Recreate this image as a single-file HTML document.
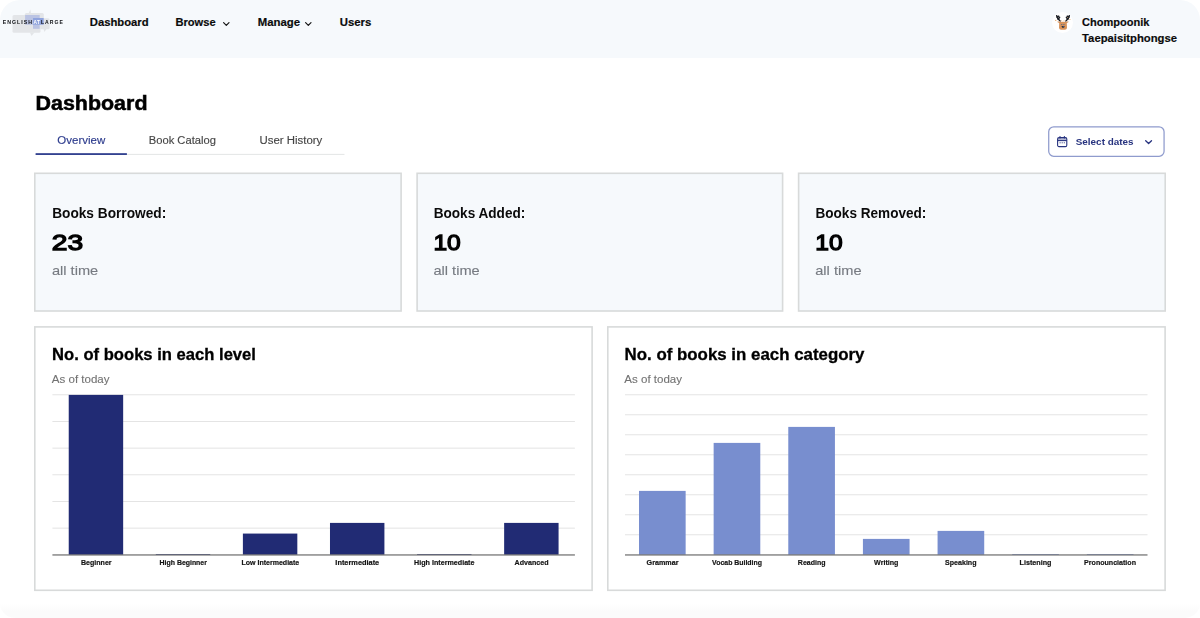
<!DOCTYPE html>
<html lang="en">
<head>
<meta charset="utf-8">
<title>Dashboard</title>
<style>
*{box-sizing:border-box;margin:0;padding:0}
html,body{width:1200px;height:618px;overflow:hidden;background:#fff}
body{font-family:"Liberation Sans",sans-serif;position:relative}
.t{position:absolute;white-space:nowrap;text-decoration:none;font-style:normal;display:block;transform-origin:0 0}
header{position:absolute;left:0;top:0;width:1200px;height:57.5px;background:#f6f9fc;border-radius:20px 20px 0 0}
svg{position:absolute;overflow:visible}
.bg{left:0;top:0}
.tabs-line{position:absolute;left:35.6px;top:154px;width:308.8px;height:1px;background:#e2e5e5}
.tabs-active{position:absolute;left:35.6px;top:153px;width:91.3px;height:2px;background:#2b3a8c}
.select{position:absolute;left:1048px;top:126.3px;width:116.6px;height:30.5px;border:0;background:transparent}
.avatar{position:absolute;left:1051.9px;top:11.5px;width:21.5px;height:21.5px;border-radius:50%;background:#fff}
footer{position:absolute;left:0;top:603px;width:1200px;height:15px;background:linear-gradient(#fff,#fbfbfb 60%);border-radius:0 0 20px 20px}
#n1{left:89px;top:14px;font-size:11.1px;line-height:14px;font-weight:700;color:#0b0b0b;transform:translate(0.77px,0.80px) scaleX(1.0154);-webkit-text-stroke:0.18px #0b0b0b}
#n2{left:175px;top:14px;font-size:11.1px;line-height:14px;font-weight:700;color:#0b0b0b;transform:translate(0.38px,0.80px) scaleX(1.0041);-webkit-text-stroke:0.18px #0b0b0b}
#n3{left:257px;top:14px;font-size:11.1px;line-height:14px;font-weight:700;color:#0b0b0b;transform:translate(0.66px,0.80px) scaleX(1.0249);-webkit-text-stroke:0.18px #0b0b0b}
#n4{left:339px;top:14px;font-size:11.1px;line-height:14px;font-weight:700;color:#0b0b0b;transform:translate(0.76px,0.80px) scaleX(1.0227);-webkit-text-stroke:0.18px #0b0b0b}
#u1{left:1082px;top:14px;font-size:11.1px;line-height:14px;font-weight:700;color:#0b0b0b;transform:translate(0.08px,0.90px) scaleX(0.9933);-webkit-text-stroke:0.18px #0b0b0b}
#u2{left:1082px;top:31px;font-size:11.1px;line-height:14px;font-weight:700;color:#0b0b0b;transform:translate(0.07px,0.40px) scaleX(1.0154);-webkit-text-stroke:0.18px #0b0b0b}
#h1{left:35px;top:91px;font-size:20.3px;line-height:25px;font-weight:700;color:#000;transform:translate(0.50px,0.00px) scaleX(1.0570);-webkit-text-stroke:0.5px #000}
#tab1{left:57px;top:132px;font-size:11.7px;line-height:15px;font-weight:400;color:#2b3a8c;transform:translate(0.36px,0.10px) scaleX(0.9814);-webkit-text-stroke:0.15px #2b3a8c}
#tab2{left:148px;top:132px;font-size:11.7px;line-height:15px;font-weight:400;color:#454545;transform:translate(0.77px,0.10px) scaleX(0.9564);-webkit-text-stroke:0.15px #454545}
#tab3{left:259px;top:132px;font-size:11.7px;line-height:15px;font-weight:400;color:#454545;transform:translate(0.56px,0.10px) scaleX(0.9753);-webkit-text-stroke:0.15px #454545}
#sel{left:1075px;top:135px;font-size:9.8px;line-height:12px;font-weight:700;color:#27337f;transform:translate(0.75px,0.70px) scaleX(1.0107)}
#cl0{left:52px;top:204px;font-size:14.2px;line-height:18px;font-weight:700;color:#0b0b0b;transform:translate(0.13px,0.00px) scaleX(0.9648)}
#cn0{left:51px;top:228px;font-size:22.9px;line-height:28px;font-weight:400;color:#000;transform:translate(0.72px,0.20px) scaleX(1.2315);-webkit-text-stroke:1.3px #000}
#ct0{left:51px;top:263px;font-size:13.0px;line-height:16px;font-weight:400;color:#777b82;transform:translate(0.88px,0.00px) scaleX(1.1255);-webkit-text-stroke:0.12px #777b82}
#cl1{left:433px;top:204px;font-size:14.2px;line-height:18px;font-weight:700;color:#0b0b0b;transform:translate(0.64px,0.00px) scaleX(0.9587)}
#cn1{left:433px;top:228px;font-size:22.9px;line-height:28px;font-weight:400;color:#000;transform:translate(0.42px,0.20px) scaleX(1.0744);-webkit-text-stroke:1.3px #000}
#ct1{left:433px;top:263px;font-size:13.0px;line-height:16px;font-weight:400;color:#777b82;transform:translate(0.38px,0.00px) scaleX(1.1255);-webkit-text-stroke:0.12px #777b82}
#cl2{left:815px;top:204px;font-size:14.2px;line-height:18px;font-weight:700;color:#0b0b0b;transform:translate(0.44px,0.00px) scaleX(0.9569)}
#cn2{left:815px;top:228px;font-size:22.9px;line-height:28px;font-weight:400;color:#000;transform:translate(0.22px,0.20px) scaleX(1.0744);-webkit-text-stroke:1.3px #000}
#ct2{left:815px;top:263px;font-size:13.0px;line-height:16px;font-weight:400;color:#777b82;transform:translate(0.18px,0.00px) scaleX(1.1255);-webkit-text-stroke:0.12px #777b82}
#g1t{left:52px;top:343px;font-size:16.9px;line-height:21px;font-weight:700;color:#000;transform:translate(0.07px,0.70px) scaleX(0.9829);-webkit-text-stroke:0.3px #000}
#g1s{left:51px;top:373px;font-size:10.8px;line-height:13px;font-weight:400;color:#727272;transform:translate(0.85px,0.00px) scaleX(1.0681);-webkit-text-stroke:0.1px #727272}
#g2t{left:624px;top:343px;font-size:16.9px;line-height:21px;font-weight:700;color:#000;transform:translate(0.56px,0.70px) scaleX(0.9984);-webkit-text-stroke:0.3px #000}
#g2s{left:624px;top:373px;font-size:10.8px;line-height:13px;font-weight:400;color:#727272;transform:translate(0.35px,0.00px) scaleX(1.0681);-webkit-text-stroke:0.1px #727272}
#l1_0{left:81px;top:558px;font-size:7.8px;line-height:10px;font-weight:700;color:#141414;transform:translate(0.00px,0.40px) scaleX(0.9046);-webkit-text-stroke:0.2px #141414}
#l1_1{left:159px;top:558px;font-size:7.8px;line-height:10px;font-weight:700;color:#141414;transform:translate(0.61px,0.40px) scaleX(0.8872);-webkit-text-stroke:0.2px #141414}
#l1_2{left:241px;top:558px;font-size:7.8px;line-height:10px;font-weight:700;color:#141414;transform:translate(0.41px,0.40px) scaleX(0.9025);-webkit-text-stroke:0.2px #141414}
#l1_3{left:335px;top:558px;font-size:7.8px;line-height:10px;font-weight:700;color:#141414;transform:translate(0.34px,0.40px) scaleX(0.9461);-webkit-text-stroke:0.2px #141414}
#l1_4{left:414px;top:558px;font-size:7.8px;line-height:10px;font-weight:700;color:#141414;transform:translate(0.10px,0.40px) scaleX(0.9167);-webkit-text-stroke:0.2px #141414}
#l1_5{left:514px;top:558px;font-size:7.8px;line-height:10px;font-weight:700;color:#141414;transform:translate(0.60px,0.40px) scaleX(0.9090);-webkit-text-stroke:0.2px #141414}
#l2_0{left:646px;top:558px;font-size:7.8px;line-height:10px;font-weight:700;color:#141414;transform:translate(0.60px,0.40px) scaleX(0.9193);-webkit-text-stroke:0.2px #141414}
#l2_1{left:712px;top:558px;font-size:7.8px;line-height:10px;font-weight:700;color:#141414;transform:translate(0.11px,0.40px) scaleX(0.8879);-webkit-text-stroke:0.2px #141414}
#l2_2{left:797px;top:558px;font-size:7.8px;line-height:10px;font-weight:700;color:#141414;transform:translate(0.86px,0.40px) scaleX(0.8979);-webkit-text-stroke:0.2px #141414}
#l2_3{left:874px;top:558px;font-size:7.8px;line-height:10px;font-weight:700;color:#141414;transform:translate(0.10px,0.40px) scaleX(0.9122);-webkit-text-stroke:0.2px #141414}
#l2_4{left:945px;top:558px;font-size:7.8px;line-height:10px;font-weight:700;color:#141414;transform:translate(0.10px,0.40px) scaleX(0.9049);-webkit-text-stroke:0.2px #141414}
#l2_5{left:1019px;top:558px;font-size:7.8px;line-height:10px;font-weight:700;color:#141414;transform:translate(0.60px,0.40px) scaleX(0.9197);-webkit-text-stroke:0.2px #141414}
#l2_6{left:1084px;top:558px;font-size:7.8px;line-height:10px;font-weight:700;color:#141414;transform:translate(0.10px,0.40px) scaleX(0.9071);-webkit-text-stroke:0.2px #141414}
</style>
</head>
<body>
<header>
  <svg class="logo" style="left:0;top:0;will-change:transform" width="70" height="45" viewBox="0 0 70 45">
    <g fill="#e3e5e8">
      <rect x="12.5" y="15" width="28" height="17.8" rx="1.5"/>
      <path d="M30 32.5 L34.5 32.5 L31.5 36 Z"/>
      <rect x="24.8" y="13" width="19" height="12" rx="1.5"/>
      <path d="M28.5 13.5 L30.4 9.5 L31 13.5 Z"/>
      <rect x="40" y="18.3" width="9.6" height="11" rx="1.5"/>
      <path d="M43.5 29 L46.5 29 L44.4 32 Z"/>
    </g>
    <rect x="25.1" y="15" width="14.6" height="9.7" fill="#bac3e3"/>
    <rect x="33" y="24.5" width="6.7" height="4.3" fill="#bac3e3"/>
    <rect x="33" y="18" width="10.7" height="6.7" fill="#8fa3dd"/>
    <g font-family="Liberation Sans, sans-serif" font-size="4.55" font-weight="700" fill="#0e1014">
      <text transform="translate(2.7 24.1) scale(1.15 1)" letter-spacing="0.9">ENGLISH</text>
      <text transform="translate(33.5 24.1) scale(1.064 1)" letter-spacing="0.4" fill="#ffffff">AT</text>
      <text transform="translate(41 24.1) scale(1.122 1)" letter-spacing="0.9">LARGE</text>
    </g>
  </svg>
  <nav>
    <a class="t" id="n1">Dashboard</a>
    <a class="t" id="n2">Browse</a>
    <svg style="left:223px;top:21.8px" width="7" height="4.5" viewBox="0 0 7 4.5"><path d="M0.6 0.7 L3.3 3.4 L6 0.7" fill="none" stroke="#111" stroke-width="1.15" stroke-linecap="round" stroke-linejoin="round"/></svg>
    <a class="t" id="n3">Manage</a>
    <svg style="left:305.2px;top:21.8px" width="7" height="4.5" viewBox="0 0 7 4.5"><path d="M0.6 0.7 L3.3 3.4 L6 0.7" fill="none" stroke="#111" stroke-width="1.15" stroke-linecap="round" stroke-linejoin="round"/></svg>
    <a class="t" id="n4">Users</a>
  </nav>
  <div class="avatar"></div>
  <svg style="left:1051.6px;top:11px" width="22" height="22" viewBox="0 0 22 22">
    <g fill="none" stroke="#1b1e24" stroke-width="1.5" stroke-linecap="round" stroke-linejoin="round">
      <path d="M8.1 10 Q5.6 8.2 4.7 4.7"/><path d="M6.2 8.3 L7.6 6.4"/><path d="M5.2 6.4 L6.7 5.2"/>
      <path d="M13.9 10 Q16.4 8.2 17.3 4.7"/><path d="M15.8 8.3 L14.4 6.4"/><path d="M16.8 6.4 L15.3 5.2"/>
    </g>
    <path d="M7.6 10.7 H14.4 L16.4 10.3 L16.4 11.2 L14.8 12 L15 17 Q14.6 18.6 13 18.8 L9 18.8 Q7.4 18.6 7 17 L7.2 12 L5.6 11.2 L5.6 10.3 Z" fill="#d8935b"/>
    <circle cx="3.8" cy="9.4" r=".55" fill="#e39a52"/><circle cx="17.9" cy="8.5" r=".55" fill="#e39a52"/><circle cx="9.7" cy="9.4" r=".45" fill="#e39a52"/><circle cx="12" cy="9.4" r=".45" fill="#e39a52"/><circle cx="15.9" cy="6.5" r=".4" fill="#e39a52"/>
    <rect x="9.2" y="13" width="1.1" height="1.1" fill="#5c6a82"/><rect x="11.4" y="13" width="1.1" height="1.1" fill="#5c6a82"/>
    <path d="M9.4 15.2 L12.5 14.9 L12.2 16.6 L10.4 16.7 Z" fill="#1b1e24"/>
    <rect x="11" y="15.3" width="1" height=".8" fill="#2f63b8"/>
  </svg>
  <span class="t" id="u1">Chompoonik</span>
  <span class="t" id="u2">Taepaisitphongse</span>
</header>
<main>
  <svg class="bg" width="1200" height="618" viewBox="0 0 1200 618">
    <rect x="34.80" y="173.30" width="366.30" height="137.70" fill="#f6f9fc" stroke="#d8dada" stroke-width="1.6"/>
    <rect x="417.10" y="173.30" width="365.50" height="137.70" fill="#f6f9fc" stroke="#d8dada" stroke-width="1.6"/>
    <rect x="798.60" y="173.30" width="366.60" height="137.70" fill="#f6f9fc" stroke="#d8dada" stroke-width="1.6"/>
    <rect x="34.80" y="326.90" width="557.30" height="263.40" fill="#ffffff" stroke="#d8dada" stroke-width="1.6"/>
    <rect x="607.80" y="326.90" width="557.30" height="263.40" fill="#ffffff" stroke="#d8dada" stroke-width="1.6"/>
    <rect x="1048.72" y="126.83" width="115.35" height="29.45" fill="#ffffff" stroke="#8f9bcd" stroke-width="1.25" rx="5"/>
    <rect x="35.6" y="153.9" width="308.9" height="0.9" fill="#e0e3e3"/>
    <rect x="35.6" y="153.2" width="91.3" height="1.75" fill="#2b3a8c"/>
    <rect x="52.4" y="394.35" width="522.5" height="0.9" fill="#e1e1e1"/>
    <rect x="52.4" y="421.02" width="522.5" height="0.9" fill="#e1e1e1"/>
    <rect x="52.4" y="447.68" width="522.5" height="0.9" fill="#e1e1e1"/>
    <rect x="52.4" y="474.35" width="522.5" height="0.9" fill="#e1e1e1"/>
    <rect x="52.4" y="501.02" width="522.5" height="0.9" fill="#e1e1e1"/>
    <rect x="52.4" y="527.68" width="522.5" height="0.9" fill="#e1e1e1"/>
    <rect x="68.73" y="394.90" width="54.43" height="160.00" fill="#212b74"/>
    <rect x="155.81" y="554.00" width="54.43" height="0.90" fill="#212b74"/>
    <rect x="242.89" y="533.57" width="54.43" height="21.33" fill="#212b74"/>
    <rect x="329.98" y="522.90" width="54.43" height="32.00" fill="#212b74"/>
    <rect x="417.06" y="554.00" width="54.43" height="0.90" fill="#212b74"/>
    <rect x="504.14" y="522.90" width="54.43" height="32.00" fill="#212b74"/>
    <rect x="52.4" y="554.30" width="522.5" height="1.3" fill="#777777"/>
    <rect x="625.0" y="394.35" width="522.5" height="0.9" fill="#e1e1e1"/>
    <rect x="625.0" y="414.35" width="522.5" height="0.9" fill="#e1e1e1"/>
    <rect x="625.0" y="434.35" width="522.5" height="0.9" fill="#e1e1e1"/>
    <rect x="625.0" y="454.35" width="522.5" height="0.9" fill="#e1e1e1"/>
    <rect x="625.0" y="474.35" width="522.5" height="0.9" fill="#e1e1e1"/>
    <rect x="625.0" y="494.35" width="522.5" height="0.9" fill="#e1e1e1"/>
    <rect x="625.0" y="514.35" width="522.5" height="0.9" fill="#e1e1e1"/>
    <rect x="625.0" y="534.35" width="522.5" height="0.9" fill="#e1e1e1"/>
    <rect x="639.00" y="490.90" width="46.65" height="64.00" fill="#788ecf"/>
    <rect x="713.64" y="442.90" width="46.65" height="112.00" fill="#788ecf"/>
    <rect x="788.28" y="426.90" width="46.65" height="128.00" fill="#788ecf"/>
    <rect x="862.92" y="538.90" width="46.65" height="16.00" fill="#788ecf"/>
    <rect x="937.57" y="530.90" width="46.65" height="24.00" fill="#788ecf"/>
    <rect x="1012.21" y="554.00" width="46.65" height="0.90" fill="#788ecf"/>
    <rect x="1086.85" y="554.00" width="46.65" height="0.90" fill="#788ecf"/>
    <rect x="625.0" y="554.30" width="522.5" height="1.3" fill="#777777"/>
  </svg>
  <h1 class="t" id="h1">Dashboard</h1>
  <div class="tabs">
    <a class="t" id="tab1">Overview</a>
    <a class="t" id="tab2">Book Catalog</a>
    <a class="t" id="tab3">User History</a>
  </div>
  <button class="select" type="button"></button>
  <svg style="left:1056.8px;top:136.2px" width="10.4" height="11.2" viewBox="0 0 10.4 11.2">
    <rect x="0.6" y="1.6" width="9.2" height="9" rx="1.4" fill="none" stroke="#27337f" stroke-width="1.1"/>
    <path d="M0.6 4.6 H9.8" stroke="#27337f" stroke-width="1.1"/>
    <path d="M3 0.5 V2 M7.4 0.5 V2" stroke="#27337f" stroke-width="1.2" stroke-linecap="round"/>
    <rect x="1" y="2" width="8.4" height="2.4" fill="#27337f" opacity=".35"/>
    <path d="M2.6 6.8 H3.6 M4.7 6.8 H5.7 M6.8 6.8 H7.8" stroke="#27337f" stroke-width="1"/>
  </svg>
  <span class="t" id="sel">Select dates</span>
  <svg style="left:1145px;top:139.8px" width="7.4" height="4.6" viewBox="0 0 7.4 4.6"><path d="M0.7 0.8 L3.6 3.5 L6.5 0.8" fill="none" stroke="#27337f" stroke-width="1.35" stroke-linecap="round" stroke-linejoin="round"/></svg>

  <section class="cards">
  <h3 class="t" id="cl0">Books Borrowed:</h3><p class="t" id="cn0">23</p><p class="t" id="ct0">all time</p>
  <h3 class="t" id="cl1">Books Added:</h3><p class="t" id="cn1">10</p><p class="t" id="ct1">all time</p>
  <h3 class="t" id="cl2">Books Removed:</h3><p class="t" id="cn2">10</p><p class="t" id="ct2">all time</p>
  </section>
  <section class="charts">
  <h2 class="t" id="g1t">No. of books in each level</h2><p class="t" id="g1s">As of today</p>
  <h2 class="t" id="g2t">No. of books in each category</h2><p class="t" id="g2s">As of today</p>
  <span class="t" id="l1_0">Beginner</span><span class="t" id="l1_1">High Beginner</span><span class="t" id="l1_2">Low Intermediate</span><span class="t" id="l1_3">Intermediate</span><span class="t" id="l1_4">High Intermediate</span><span class="t" id="l1_5">Advanced</span>
  <span class="t" id="l2_0">Grammar</span><span class="t" id="l2_1">Vocab Building</span><span class="t" id="l2_2">Reading</span><span class="t" id="l2_3">Writing</span><span class="t" id="l2_4">Speaking</span><span class="t" id="l2_5">Listening</span><span class="t" id="l2_6">Pronounciation</span>
  </section>
</main>
<footer></footer>
</body>
</html>
